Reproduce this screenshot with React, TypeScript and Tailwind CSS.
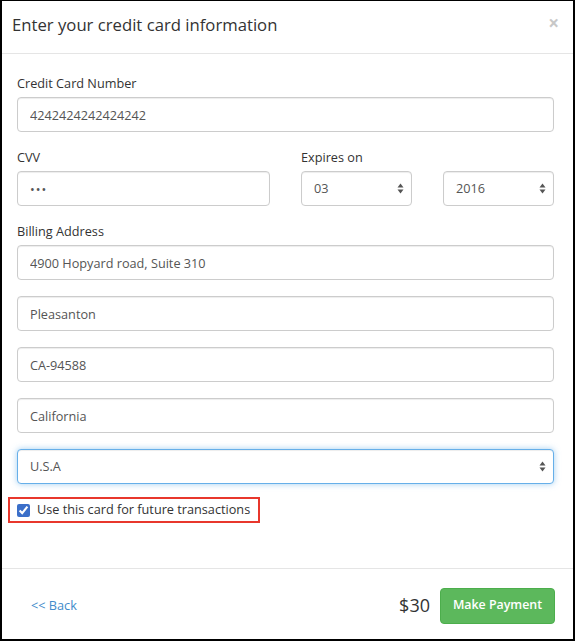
import React from "react";

const field =
  "h-[35px] w-full rounded-[4px] border border-[#ccc] bg-white px-3 text-[12.7px] text-[#555] shadow-[inset_0_1px_1px_rgba(0,0,0,0.075)] outline-none";

function Arrows() {
  return (
    <svg width="7" height="11" viewBox="0 0 7 11" className="shrink-0">
      <path d="M3.5 0.5 L6.5 4.5 L0.5 4.5 Z" fill="#555" />
      <path d="M3.5 10.5 L6.5 6.5 L0.5 6.5 Z" fill="#555" />
    </svg>
  );
}

function FakeSelect({ value, focused }: { value: string; focused?: boolean }) {
  return (
    <div
      className={
        focused
          ? "flex h-[35px] w-full items-center justify-between rounded-[4px] border border-[#66afe9] bg-white pl-3 pr-[7px] text-[12.7px] text-[#555] shadow-[inset_0_1px_1px_rgba(0,0,0,0.075),0_0_6px_rgba(102,175,233,0.6)]"
          : "flex h-[35px] w-full items-center justify-between rounded-[4px] border border-[#ccc] bg-white pl-3 pr-[7px] text-[12.7px] text-[#555] shadow-[inset_0_1px_1px_rgba(0,0,0,0.075)]"
      }
    >
      <span>{value}</span>
      <Arrows />
    </div>
  );
}

export default function App() {
  return (
    <div className="flex h-[641px] w-[575px] flex-col border-t border-l-2 border-r-2 border-b-2 border-black bg-white font-['Open_Sans',sans-serif] text-[#333]">
      {/* header */}
      <div className="flex h-[53px] shrink-0 items-center justify-between border-b border-[#e5e5e5] pb-[4px] pl-[10px] pr-[14px]">
        <h4 className="text-[16.7px] leading-none text-[#333]">Enter your credit card information</h4>
        <span className="-mt-[4px] text-[19px] font-bold leading-none text-[#c8c8c8]">×</span>
      </div>

      {/* body */}
      <div className="flex flex-1 flex-col pl-[15px] pr-[19px] pt-[20px]">
        <label className="mb-[5px] block text-[12.7px] leading-[18px]">Credit Card Number</label>
        <input className={field} defaultValue="4242424242424242" readOnly />

        <div className="mt-[16px] flex gap-x-[31px]">
          <div className="w-[253px]">
            <label className="mb-[5px] block text-[12.7px] leading-[18px]">CVV</label>
            <input className={field + " tracking-[1px]"} defaultValue="•••" readOnly />
          </div>
          <div className="w-[111px]">
            <label className="mb-[5px] block whitespace-nowrap text-[12.7px] leading-[18px]">Expires on</label>
            <FakeSelect value="03" />
          </div>
          <div className="w-[111px]">
            <div className="mb-[5px] h-[18px]" />
            <FakeSelect value="2016" />
          </div>
        </div>

        <label className="mb-[5px] mt-[16px] block text-[12.7px] leading-[18px]">Billing Address</label>
        <div className="flex flex-col gap-[16px]">
          <input className={field} defaultValue="4900 Hopyard road, Suite 310" readOnly />
          <input className={field} defaultValue="Pleasanton" readOnly />
          <input className={field} defaultValue="CA-94588" readOnly />
          <input className={field} defaultValue="California" readOnly />
          <FakeSelect value="U.S.A" focused />
        </div>

        <div className="-ml-[9px] mt-[13px] flex h-[26px] w-[252px] items-center gap-[7px] border-2 border-[#e8372c] pl-[7px]">
          <input type="checkbox" defaultChecked className="h-[13px] w-[13px] accent-[#3b6fc9]" />
          <span className="text-[12.7px] text-[#333]">Use this card for future transactions</span>
        </div>
      </div>

      {/* footer */}
      <div className="flex h-[71px] shrink-0 items-center justify-between border-t border-[#e5e5e5] pl-[29px] pr-[18px] pt-[3px]">
        <a className="text-[12.7px] text-[#428bca]">&lt;&lt; Back</a>
        <div className="flex items-center gap-[10px]">
          <span className="text-[18px] text-[#333]">$30</span>
          <button className="h-[36px] w-[115px] rounded-[4px] border border-[#4cae4c] bg-[#5cb85c] text-[12.4px] font-semibold text-white">
            Make Payment
          </button>
        </div>
      </div>
    </div>
  );
}
